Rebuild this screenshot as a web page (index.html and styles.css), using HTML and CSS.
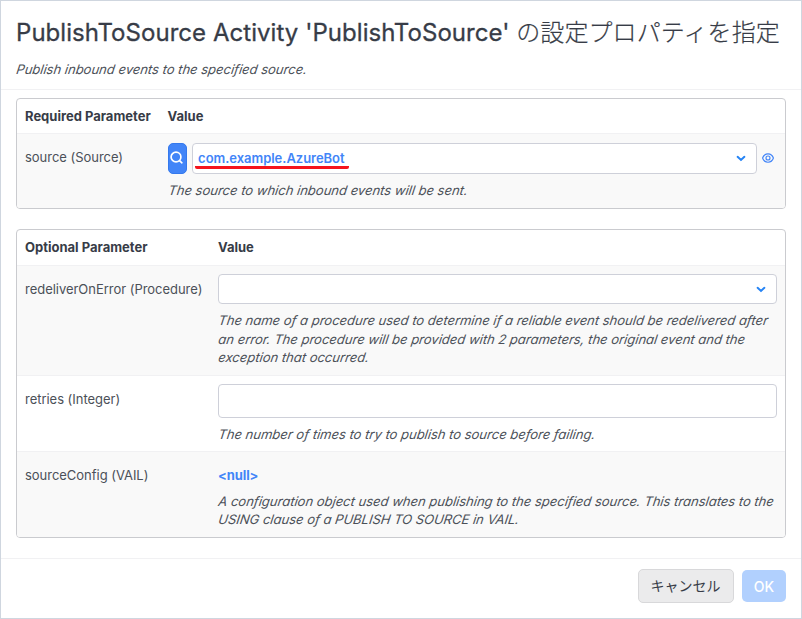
FILE: index.html
```html
<!DOCTYPE html>
<html lang="ja">
<head>
<meta charset="utf-8">
<title>PublishToSource Activity</title>
<link rel="stylesheet" href="styles.css">
</head>
<body>
<div class="dialog">
  <header class="dialog-header">
    <h1><span class="title-en">PublishToSource Activity 'PublishToSource'</span> <span class="title-ja">の設定プロパティを指定</span></h1>
    <p class="hint"><span>Publish inbound events to the specified source.</span></p>
  </header>
  <main class="dialog-body">
    <section class="params required">
      <div class="row head"><div>Required Parameter</div><div>Value</div></div>
      <div class="row shaded source">
        <div class="name">source (Source)</div>
        <div class="value">
          <div class="picker">
            <button class="search" aria-label="Search"><svg width="14" height="14" viewBox="0 0 14 14"><circle cx="6" cy="6" r="4.9"/><path d="M9.5 9.6L11.9 11.8"/></svg></button>
            <div class="select"><span class="chosen">com.example.AzureBot</span><svg class="chevron" width="10" height="7" viewBox="0 0 10 7"><path d="M1.6 1.8L5 4.9L8.4 1.8"/></svg></div>
            <svg class="eye" width="12" height="10" viewBox="0 0 12 10"><path d="M.6 5C1.6 2 3.6 .8 6 .8S10.4 2 11.4 5C10.4 8 8.4 9.2 6 9.2S1.6 8 .6 5Z"/><circle cx="6" cy="5" r="2"/></svg>
          </div>
          <p class="hint"><span>The source to which inbound events will be sent.</span></p>
        </div>
      </div>
    </section>
    <section class="params optional">
      <div class="row head"><div>Optional Parameter</div><div>Value</div></div>
      <div class="row shaded redeliver">
        <div class="name">redeliverOnError (Procedure)</div>
        <div class="value">
          <div class="select"><span></span><svg class="chevron" width="10" height="7" viewBox="0 0 10 7"><path d="M1.6 1.8L5 4.9L8.4 1.8"/></svg></div>
          <p class="hint"><span>The name of a procedure used to determine if a reliable event should be redelivered after</span> <span>an error. The procedure will be provided with 2 parameters, the original event and the</span> <span>exception that occurred.</span></p>
        </div>
      </div>
      <div class="row retries">
        <div class="name">retries (Integer)</div>
        <div class="value"><div class="input"></div><p class="hint"><span>The number of times to try to publish to source before failing.</span></p></div>
      </div>
      <div class="row shaded config">
        <div class="name">sourceConfig (VAIL)</div>
        <div class="value"><a class="null">&lt;null&gt;</a><p class="hint"><span>A configuration object used when publishing to the specified source. This translates to the</span> <span>USING clause of a PUBLISH TO SOURCE in VAIL.</span></p></div>
      </div>
    </section>
  </main>
  <footer class="dialog-footer">
    <button class="btn cancel">キャンセル</button>
    <button class="btn ok">OK</button>
  </footer>
</div>
</body>
</html>
```
FILE: styles.css
```css
* { box-sizing: border-box; }
body { margin: 0; font-family: Inter, "Noto Sans CJK JP", sans-serif; font-size: 13px; color: #4b5058; background: #fff; }
h1, p { margin: 0; }
button { font-family: inherit; margin: 0; padding: 0; }
svg { fill: none; flex: none; }
.dialog { width: 802px; height: 619px; border: 1px solid #cfd6df; display: flex; flex-direction: column; }
.dialog-header { height: 89px; padding: 14px 15px 0; border-bottom: 1px solid #f1f1f3; }
h1 { height: 36px; line-height: 36px; font-size: 24px; font-weight: 400; color: #373c47; white-space: nowrap; }
.title-en { letter-spacing: .05px; -webkit-text-stroke: .3px #373c47; }
.title-ja { font-weight: 300; letter-spacing: .1px; -webkit-text-stroke: .2px #373c47; }
.hint { font-style: italic; line-height: 18.5px; white-space: nowrap; }
.hint span { display: block; transform: skewX(-9deg); transform-origin: 0 70%; }
.dialog-header .hint { margin-top: 9px; }
.dialog-body { padding: 8px 15px 0; height: 468px; }
.params { border: 1px solid #cacbcf; border-radius: 4px; overflow: hidden; }
.required { height: 111px; margin-bottom: 20px; }
.optional { height: 309px; }
.row { display: grid; padding: 0 8px; border-top: 1px solid #f1f1f3; }
.required .row { grid-template-columns: 142.6px 1fr; }
.optional .row { grid-template-columns: 193px 1fr; }
.head { border-top: 0; height: 34px; line-height: 35px; font-weight: 700; color: #373c47; }
.optional .head { height: 35px; }
.shaded { background: #f9f9f9; }
.source { height: 75px; }
.redeliver { height: 110px; }
.retries { height: 76px; }
.config { height: 86px; }
.name { padding-top: 14px; line-height: 18px; white-space: nowrap; letter-spacing: -.03px; }
.value { padding-top: 8px; min-width: 0; }
.picker { display: flex; align-items: center; height: 32px; }
.search { width: 19px; height: 31px; border: 1px solid #3579ed; border-radius: 5px; background: #4285f8; display: flex; align-items: flex-start; justify-content: center; padding-top: 7px; margin-right: 5px; }
.search svg { stroke: #fff; stroke-width: 1.7; stroke-linecap: round; }
.select { height: 30px; border: 1px solid #ced0d9; border-radius: 4px; background: #fff; display: flex; align-items: center; justify-content: space-between; padding: 0 10px 0 2px; }
.picker .select { width: 565px; height: 31px; }
.chosen { color: #4285f8; font-weight: 600; line-height: 18px; height: 20px; padding: 0 4px 0 3.5px; border-bottom: 3px solid #f5141d; border-radius: 2px; margin-top: 1px; letter-spacing: -.03px; }
.chevron { stroke: #2684f5; stroke-width: 2; stroke-linecap: round; }
.eye { stroke: #4285f8; stroke-width: 1.15; margin-left: 5.5px; }
.value .hint { margin-top: 7px; }
.input { height: 34px; border: 1px solid #ced0d9; border-radius: 4px; background: #fff; }
.null { display: block; color: #4285f8; font-weight: 700; line-height: 18px; padding-top: 6px; letter-spacing: -.1px; }
.config .hint { margin-top: 8px; line-height: 18px; }
.dialog-footer { height: 60px; border-top: 1px solid #f1f1f3; padding: 10px 15px 0; display: flex; justify-content: flex-end; gap: 8px; }
.btn { border-radius: 5px; font-size: 14px; }
.cancel { width: 96px; height: 34px; border: 1px solid #d8d8da; background: #ebebec; color: #373c47; padding: 0 1px 2px 0; }
.ok { width: 44px; height: 32px; margin-top: 1px; border: 0; background: #b1d0fe; color: #fff; font-weight: 500; }
```
